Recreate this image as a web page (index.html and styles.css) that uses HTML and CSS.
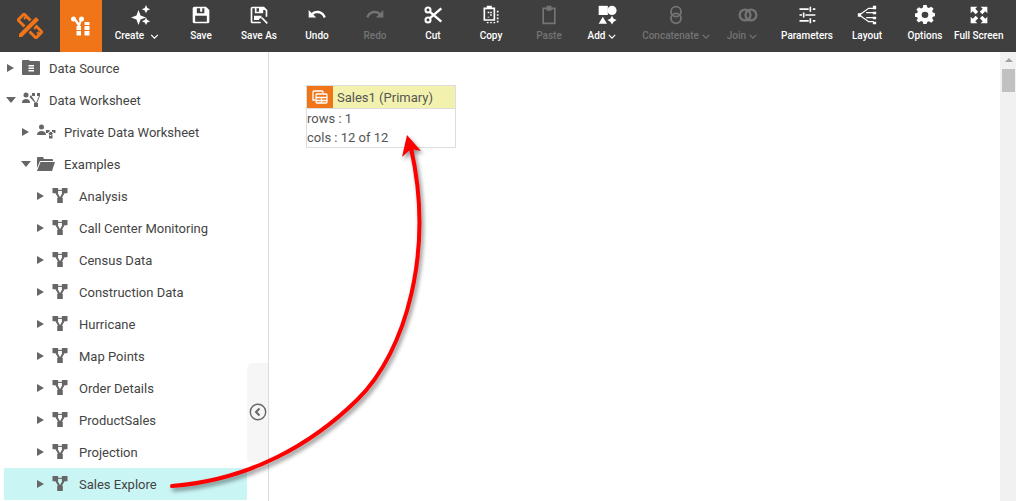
FILE: index.html
```html
<!DOCTYPE html>
<html lang="en">
<head>
<meta charset="utf-8">
<title>Data Worksheet</title>
<link rel="stylesheet" href="styles.css">
</head>
<body>
<svg class="defs" width="0" height="0" aria-hidden="true">
  <symbol id="ws" viewBox="0 0 16 16">
    <path d="M0 0h6v5.500H0zM10 0h6v5.500h-6zM5 10.500h6V16H5z"/>
    <path d="M3.500 4 8 12l4.500-8" fill="none" stroke="currentColor" stroke-width="2.200"/>
    <path d="M5 2.500h6" fill="none" stroke="currentColor" stroke-width="1.200"/>
  </symbol>
  <symbol id="chev" viewBox="0 0 10 6">
    <path d="M1 1l4 4 4-4" fill="none" stroke="currentColor" stroke-width="1.500"/>
  </symbol>
</svg>
<div class="app">
  <header class="toolbar">
    <div class="logo">
      <svg width="26" height="26" viewBox="0 0 26 26">
        <path d="M1 7 7 1l18 18-6 6z" fill="none" stroke="#f07519" stroke-width="3"/>
        <path d="M7 6l2-2M12 11l2-2M17 16l2-2M20 21l2-2" stroke="#f07519" stroke-width="2"/>
        <path d="M1.500 20.500 19 3l4 4L5.500 24.500 1 25z" fill="#f07519" stroke="#3f3f3f" stroke-width="1.500"/>
      </svg>
    </div>
    <div class="brand">
      <svg width="20" height="20" viewBox="0 0 20 20" fill="#fff">
        <circle cx="2.500" cy="3" r="2.500"/><circle cx="10.500" cy="3" r="2.500"/>
        <path d="M3 4l4 6h2l2-6-2-.5L8 7 5 3z"/>
        <path d="M5.500 10h4.500v4H5.500zM5.500 15h4.500v4.500H5.500zM13.500 6h5v3h-5zM13.500 10h5v4h-5zM13.500 15h5v4.500h-5z"/>
      </svg>
    </div>
    <button class="tool w-create">
      <svg class="ico ico-create" viewBox="0 0 24 24"><path d="M9 6l2.500 6.500L18 15l-6.500 2.500L9 24l-2.500-6.500L0 15l6.500-2.500zM18 0l1.500 3.500L23 5l-3.500 1.500L18 10l-1.500-3.500L13 5l3.500-1.500zM18 15l1.500 3L23 19.500l-3.500 1.500L18 24l-1.500-3-3.500-1.500 3.500-1.500z"/></svg>
      <span class="lbl">Create <svg class="chev chev-wide" viewBox="0 0 10 6"><use href="#chev"/></svg></span>
    </button>
    <button class="tool">
      <svg class="ico" viewBox="0 0 24 24"><path fill-rule="evenodd" d="M4 2h14l4 4v14a2 2 0 0 1-2 2H4a2 2 0 0 1-2-2V4a2 2 0 0 1 2-2zm3 2v6h9V4h-2.500v4H11V4zM5 13v7h14v-7z"/></svg>
      <span class="lbl">Save</span>
    </button>
    <button class="tool">
      <svg class="ico" viewBox="0 0 24 24"><path fill-rule="evenodd" d="M4 2h14l4 4v8h-2V7l-1-1h-2v4H7V4H4v16h10v2H4a2 2 0 0 1-2-2V4a2 2 0 0 1 2-2zm5 2v4h3V4z"/><path d="M6 13h9v2l-3 2v1H6z"/><path d="M15 15l7 7" fill="none" stroke="#fff" stroke-width="2"/></svg>
      <span class="lbl">Save As</span>
    </button>
    <button class="tool">
      <svg class="ico" viewBox="0 0 24 24"><path d="M3 5v9h9l-3.500-3.500C10 9.300 12 9 13.500 9c3.500 0 6.500 2.300 7.500 5.500l2.500-1C22 9 18 6 13.500 6 11 6 8.500 7 6.500 8.500z" transform="translate(-1 1)"/></svg>
      <span class="lbl">Undo</span>
    </button>
    <button class="tool off">
      <svg class="ico" viewBox="0 0 24 24"><path d="M3 5v9h9l-3.500-3.500C10 9.300 12 9 13.500 9c3.500 0 6.500 2.300 7.500 5.500l2.500-1C22 9 18 6 13.500 6 11 6 8.500 7 6.500 8.500z" transform="translate(25 1) scale(-1 1)"/></svg>
      <span class="lbl">Redo</span>
    </button>
    <button class="tool">
      <svg class="ico" viewBox="0 0 24 24"><circle cx="6" cy="6" r="3" fill="none" stroke="#fff" stroke-width="2.500"/><circle cx="6" cy="18" r="3" fill="none" stroke="#fff" stroke-width="2.500"/><path d="M8 8l14 12M8 16 22 4" stroke="#fff" stroke-width="3" fill="none"/></svg>
      <span class="lbl">Cut</span>
    </button>
    <button class="tool">
      <svg class="ico" viewBox="0 0 24 24"><path fill-rule="evenodd" d="M3 3h4V1h6v2h4v16H3zm2 2v12h10V5z"/><path d="M8 8h2v2H8zM11 8h2v2h-2zM11 11h2v2h-2zM8 14h2v1H8zM19 7h2v2h-2zM19 11h2v2h-2zM19 15h2v2h-2zM19 19h2v2h-2zM15 20.500h2v1.500h-2zM11 20.500h2v1.500h-2zM7 20.500h2v1.500H7z"/></svg>
      <span class="lbl">Copy</span>
    </button>
    <button class="tool off">
      <svg class="ico" viewBox="0 0 24 24"><path fill-rule="evenodd" d="M4 3h5V1h6v2h5v20H4zm2 2v16h12V5h-3v2H9V5z"/></svg>
      <span class="lbl">Paste</span>
    </button>
    <button class="tool w-add">
      <svg class="ico ico-add" viewBox="0 0 24 24"><path d="M2 1h11v11H2z"/><circle cx="18" cy="6.500" r="5.500"/><path d="M7 14l5 8.500H2zM18 13l2 3.500L23.500 18 20 20l-2 3.500-2-3.500-3.500-2 3.500-1.500z"/></svg>
      <span class="lbl">Add <svg class="chev" viewBox="0 0 10 6"><use href="#chev"/></svg></span>
    </button>
    <button class="tool off w-concat">
      <svg class="ico" viewBox="0 0 24 24"><g fill="none" stroke="#747474" stroke-width="2.200"><rect x="6" y="2" width="12" height="12" rx="6"/><rect x="6" y="10" width="12" height="12" rx="6"/></g></svg>
      <span class="lbl">Concatenate <svg class="chev" viewBox="0 0 10 6"><use href="#chev"/></svg></span>
    </button>
    <button class="tool off w-join">
      <svg class="ico ico-join" viewBox="0 0 24 24"><g fill="none" stroke="#747474" stroke-width="2.800"><circle cx="8.500" cy="12" r="6.500"/><circle cx="15.500" cy="12" r="6.500"/></g></svg>
      <span class="lbl">Join <svg class="chev" viewBox="0 0 10 6"><use href="#chev"/></svg></span>
    </button>
    <button class="tool w-param">
      <svg class="ico" viewBox="0 0 24 24"><path d="M3 4h11v2H3zM19 4h3v2h-3zM15 2h2v6h-2zM3 11h3v2H3zM10 11h12v2H10zM7 9h2v6H7zM3 18h11v2H3zM19 18h3v2h-3zM15 16h2v6h-2z"/></svg>
      <span class="lbl">Parameters</span>
    </button>
    <button class="tool">
      <svg class="ico" viewBox="0 0 24 24"><path d="M1 10h4v4H1zM19 1h4v4h-4zM19 8h4v3h-4zM19 14h4v3h-4zM19 20h4v3h-4z"/><path d="M4 11 14 4h6M4 13l10 7h6M11 9h9M11 15h9" fill="none" stroke="#fff" stroke-width="1.500"/></svg>
      <span class="lbl">Layout</span>
    </button>
    <button class="tool">
      <svg class="ico" viewBox="0 0 24 24"><path fill-rule="evenodd" d="M10 1h4l.7 3.100 2 .9 2.800-1.700 2.800 2.800L20.600 9l.8 2 3 .8v4l-3 .6-.8 2 1.700 2.900-2.800 2.800-2.800-1.700-2 .8L14 26h-4l-.7-3-2-.9-2.800 1.700-2.800-2.800L3.400 19l-.8-2-2.900-.7v-4l2.900-.7.800-2-1.700-2.800 2.800-2.800 2.800 1.700 2-.9zM12 10a4 4 0 1 0 0 8 4 4 0 0 0 0-8z" transform="translate(0 -1) scale(1 .92)"/></svg>
      <span class="lbl">Options</span>
    </button>
    <button class="tool w-full">
      <svg class="ico" viewBox="0 0 24 24"><path d="M2 2h8L7.500 4.500 11 8 8 11 4.500 7.500 2 10zM22 2v8l-2.500-2.500L16 11l-3-3 3.500-3.500L14 2zM2 22v-8l2.500 2.500L8 13l3 3-3.500 3.500L10 22zM22 22h-8l2.500-2.500L13 16l3-3 3.500 3.500L22 14z"/></svg>
      <span class="lbl">Full Screen</span>
    </button>
  </header>

  <div class="body">
    <aside class="side">
      <ul class="tree">
        <li class="row l0"><i class="tri"></i><span class="tico"><svg width="18" height="15" viewBox="0 0 18 15" fill="#666"><path fill-rule="evenodd" d="M1 0h6l1 1h9a1 1 0 0 1 1 1v12a1 1 0 0 1-1 1H1a1 1 0 0 1-1-1V1a1 1 0 0 1 1-1zm5.500 5v1.500h5.500V5zm0 2.500V9h5.500V7.500zm0 2.500v1.500h5.500V10z"/></svg></span><span>Data Source</span></li>
        <li class="row l0"><i class="tri open"></i><span class="tico"><svg width="19" height="16" viewBox="0 0 19 16" fill="#666"><circle cx="4" cy="3" r="2.500"/><path d="M0 11c0-3 1.500-4 4-4s4 1 4 4z"/><path d="M10 1h3v3h-3zM15 1h3v3h-3zM12 11h4v4h-4zM7.500 5 9 3l5 8h-1zM17 4h1l-3 7h-1z"/></svg></span><span>Data Worksheet</span></li>
        <li class="row l1"><i class="tri"></i><span class="tico"><svg width="19" height="15" viewBox="0 0 19 15" fill="#666"><circle cx="4.500" cy="3" r="2.500"/><path d="M0 11c0-3 2-4 4.500-4S9 8 9 11z"/><path d="M9 6h3.500v3H9zM15 6h3.500v3H15zM12 11h3.500v3.500H12zM11 8l2 4h1l3-4z"/></svg></span><span>Private Data Worksheet</span></li>
        <li class="row l1"><i class="tri open"></i><span class="tico"><svg width="18" height="14" viewBox="0 0 18 14" fill="#666"><path d="M0 1a1 1 0 0 1 1-1h5l1 2h8a1 1 0 0 1 1 1v1H3L0 11z"/><path d="M3.500 5H18l-3 9H0z"/></svg></span><span>Examples</span></li>
        <li class="row l2"><i class="tri"></i><span class="tico"><svg class="yico"><use href="#ws"/></svg></span><span>Analysis</span></li>
        <li class="row l2"><i class="tri"></i><span class="tico"><svg class="yico"><use href="#ws"/></svg></span><span>Call Center Monitoring</span></li>
        <li class="row l2"><i class="tri"></i><span class="tico"><svg class="yico"><use href="#ws"/></svg></span><span>Census Data</span></li>
        <li class="row l2"><i class="tri"></i><span class="tico"><svg class="yico"><use href="#ws"/></svg></span><span>Construction Data</span></li>
        <li class="row l2"><i class="tri"></i><span class="tico"><svg class="yico"><use href="#ws"/></svg></span><span>Hurricane</span></li>
        <li class="row l2"><i class="tri"></i><span class="tico"><svg class="yico"><use href="#ws"/></svg></span><span>Map Points</span></li>
        <li class="row l2"><i class="tri"></i><span class="tico"><svg class="yico"><use href="#ws"/></svg></span><span>Order Details</span></li>
        <li class="row l2"><i class="tri"></i><span class="tico"><svg class="yico"><use href="#ws"/></svg></span><span>ProductSales</span></li>
        <li class="row l2"><i class="tri"></i><span class="tico"><svg class="yico"><use href="#ws"/></svg></span><span>Projection</span></li>
        <li class="row l2 sel"><i class="tri"></i><span class="tico"><svg class="yico"><use href="#ws"/></svg></span><span>Sales Explore</span></li>
      </ul>
      <div class="handle">
        <svg width="18" height="18" viewBox="0 0 18 18"><circle cx="9" cy="9" r="7.700" fill="none" stroke="#666" stroke-width="1.400"/><path d="M10.500 5.500 7 9l3.500 3.500" fill="none" stroke="#666" stroke-width="2"/></svg>
      </div>
    </aside>
    <main class="canvas">
      <section class="card">
        <div class="card-head">
          <span class="card-ico">
            <svg width="16" height="14" viewBox="0 0 16 14" fill="none" stroke="#fff" stroke-width="1.300"><path d="M3 10H1V2a1 1 0 0 1 1-1h8a1 1 0 0 1 1 1v1"/><rect x="4" y="4" width="11" height="9" rx="1"/><path d="M4 7.500h11M4 10.500h11M9.500 7.500V13"/></svg>
          </span>
          <span>Sales1 (Primary)</span>
        </div>
        <div class="card-body">
          <div>rows : 1</div>
          <div>cols : 12 of 12</div>
        </div>
      </section>
    </main>
    <div class="scroll">
      <i class="scroll-up"></i>
      <i class="scroll-thumb"></i>
    </div>
  </div>
  <svg class="arrow" width="1016" height="501" viewBox="0 0 1016 501">
    <path d="M172 486C250 480 312 444 357 400 407 351 434 250 411 148" fill="none" stroke="#f00" stroke-width="4" stroke-linecap="round"/>
    <path d="M407 135 421 151 411 149 402 157z" fill="#f00"/>
  </svg>
</div>
</body>
</html>
```
FILE: styles.css
```css
* { box-sizing: border-box; }
html, body { margin: 0; padding: 0; height: 100%; overflow: hidden; background: #fff; }
body { font-family: Roboto, "Liberation Sans", sans-serif; }
.defs { position: absolute; }
.app { position: relative; display: flex; flex-direction: column; height: 501px; overflow: hidden; }

.toolbar { display: flex; flex: 0 0 52px; background: #3f3f3f; color: #fff; }
.logo { flex: 0 0 60px; display: flex; align-items: center; justify-content: center; }
.brand { flex: 0 0 42px; display: flex; align-items: center; justify-content: center; background: #f07519; }

.tool { flex: 0 0 58px; display: flex; flex-direction: column; align-items: center; padding: 5px 0 0; border: 0; background: none; color: #fff; font: 500 10px/12px Roboto, sans-serif; white-space: nowrap; }
.tool.off { color: #747474; }
.ico { width: 20px; height: 20px; fill: currentColor; display: block; margin-bottom: 5px; }
.ico-create { margin-left: 8px; }
.ico-add { margin-left: 10px; }
.ico-join { margin-left: 12px; }
.lbl { display: flex; align-items: center; gap: 3px; height: 12px; }
.chev { width: 8px; height: 5px; }
.chev-wide { width: 9px; margin-left: 3px; }
.w-create { flex-basis: 70px; }
.w-add { flex-basis: 48px; }
.w-concat { flex-basis: 100px; }
.w-join { flex-basis: 32px; }
.w-param { flex-basis: 62px; margin-left: 18px; }
.w-full { flex-basis: 46px; }

.body { flex: 1; display: flex; min-height: 0; }
.side { position: relative; flex: 0 0 269px; padding: 0 21px 0 4px; border-right: 1px solid #ddd; }
.tree { margin: 0; padding: 0; list-style: none; font-size: 13px; color: #444; }
.row { display: flex; align-items: center; height: 32px; }
.l0 { padding-left: 3px; }
.l1 { padding-left: 18px; }
.l2 { padding-left: 33px; }
.sel { background: #c9f5f5; }
.tri { flex: 0 0 15px; height: 0; display: block; }
.tri::before { content: ""; display: block; width: 0; height: 0; border-left: 7px solid #666; border-top: 4px solid transparent; border-bottom: 4px solid transparent; margin-top: -4px; }
.tri.open::before { border-left: 5px solid transparent; border-right: 5px solid transparent; border-top: 6px solid #666; border-bottom: 0; margin: -3px 0 0 -1px; }
.tico { flex: 0 0 27px; display: flex; align-items: center; height: 32px; color: #666; padding-bottom: 1px; }
.yico { width: 16px; height: 15px; fill: #666; color: #666; }

.handle { position: absolute; top: 311px; right: 0; width: 21px; height: 100px; padding-bottom: 2px; display: flex; align-items: center; justify-content: center; background: #f6f6f6; border-radius: 6px 0 0 6px; }

.canvas { flex: 1; padding: 33px 0 0 37px; }
.card { width: 150px; height: 63px; border: 1px solid #ddd; font-size: 13px; color: #555; }
.card-head { display: flex; align-items: center; gap: 4px; height: 22px; background: #f2f2ae; }
.card-ico { flex: 0 0 26px; height: 22px; display: flex; align-items: center; justify-content: center; background: #f07519; }
.card-body { line-height: 19px; border-top: 1px solid #ddd; }

.scroll { flex: 0 0 16px; background: #f1f1f1; padding: 6px 1px 0 2px; }
.scroll-up { display: block; width: 0; height: 0; margin: 0 auto 7px; border-left: 4px solid transparent; border-right: 4px solid transparent; border-bottom: 4px solid #a3a3a3; }
.scroll-thumb { display: block; height: 23px; background: #c1c1c1; }

.arrow { position: absolute; left: 0; top: 0; pointer-events: none; filter: drop-shadow(2px 3px 2px rgba(0,0,0,.45)); }
```
